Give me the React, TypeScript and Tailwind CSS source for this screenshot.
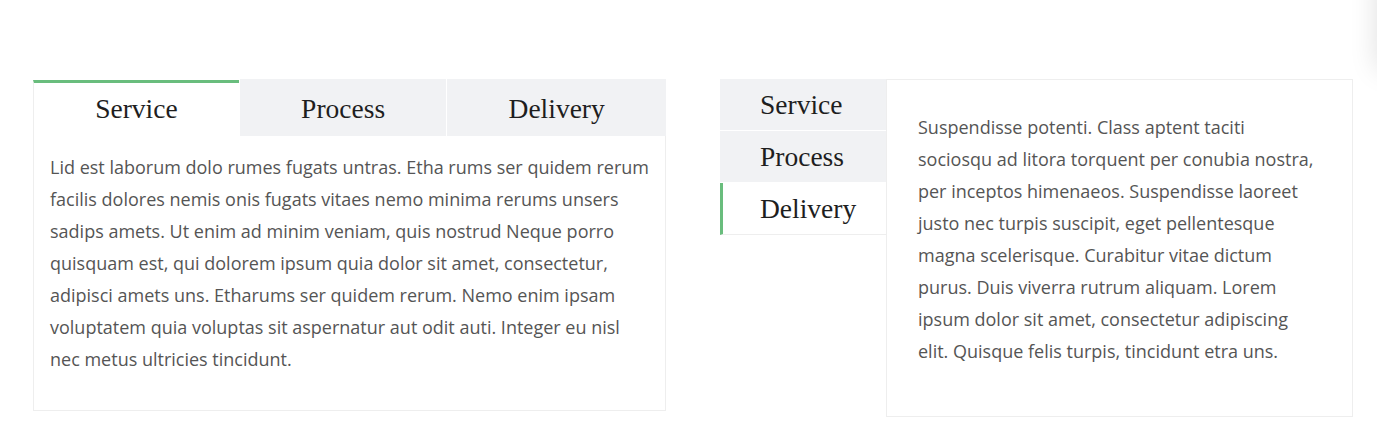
import { useState } from "react";

const tabs = ["Service", "Process", "Delivery"];

const leftText =
  "Lid est laborum dolo rumes fugats untras. Etha rums ser quidem rerum facilis dolores nemis onis fugats vitaes nemo minima rerums unsers sadips amets. Ut enim ad minim veniam, quis nostrud Neque porro quisquam est, qui dolorem ipsum quia dolor sit amet, consectetur, adipisci amets uns. Etharums ser quidem rerum. Nemo enim ipsam voluptatem quia voluptas sit aspernatur aut odit auti. Integer eu nisl nec metus ultricies tincidunt.";

const rightText =
  "Suspendisse potenti. Class aptent taciti sociosqu ad litora torquent per conubia nostra, per inceptos himenaeos. Suspendisse laoreet justo nec turpis suscipit, eget pellentesque magna scelerisque. Curabitur vitae dictum purus. Duis viverra rutrum aliquam. Lorem ipsum dolor sit amet, consectetur adipiscing elit. Quisque felis turpis, tincidunt etra uns.";

export default function App() {
  const [hTab, setHTab] = useState(0);
  const [vTab, setVTab] = useState(2);

  return (
    <div className="relative min-h-[447px] overflow-hidden bg-white font-['Open_Sans',sans-serif]">
      {/* faint shadow of an off-screen floating control */}
      <div className="absolute right-[-44px] top-[-30px] h-[100px] w-[44px] rounded-md bg-white shadow-[0_0_28px_rgba(0,0,0,0.13)]" />

      <div className="flex gap-[54px] pl-[33px] pt-[79px]">
        {/* Horizontal tabs */}
        <div className="w-[633px]">
          <div className="flex h-[57px]">
            {tabs.map((t, i) => (
              <button
                key={t}
                onClick={() => setHTab(i)}
                className={`flex-auto px-[58px] font-['Liberation_Serif',serif] text-[27.5px] leading-none text-[#1e1e1e] ${
                  i > 0 ? "border-l border-white" : ""
                } ${
                  hTab === i
                    ? "mt-px border-l border-l-[#eeeeee] border-t-[3px] border-t-[#69bd7d] bg-white pb-[2px]"
                    : "bg-[#f1f2f4] pt-[2px]"
                }`}
              >
                {t}
              </button>
            ))}
          </div>
          <div className="border border-t-0 border-[#eeeeee] px-4 pb-[35px] pt-[15px] text-[18px] leading-[32px] text-[#555]">
            <p>{leftText}</p>
          </div>
        </div>

        {/* Vertical tabs */}
        <div className="flex w-[633px]">
          <div className="flex w-[166px] shrink-0 flex-col">
            {tabs.map((t, i) => (
              <button
                key={t}
                onClick={() => setVTab(i)}
                className={`h-[52px] text-left font-['Liberation_Serif',serif] text-[27.5px] leading-none text-[#1e1e1e] ${
                  vTab === i
                    ? "border-b border-l-[3px] border-b-[#eeeeee] border-l-[#69bd7d] bg-white pl-[37px]"
                    : "border-b border-white bg-[#f1f2f4] pl-[40px]"
                }`}
              >
                {t}
              </button>
            ))}
          </div>
          <div className="flex-1 border border-[#eeeeee] px-[31px] pb-[49px] pt-[31px] text-[18px] leading-[32px] text-[#555]">
            <p>{rightText}</p>
          </div>
        </div>
      </div>
    </div>
  );
}
